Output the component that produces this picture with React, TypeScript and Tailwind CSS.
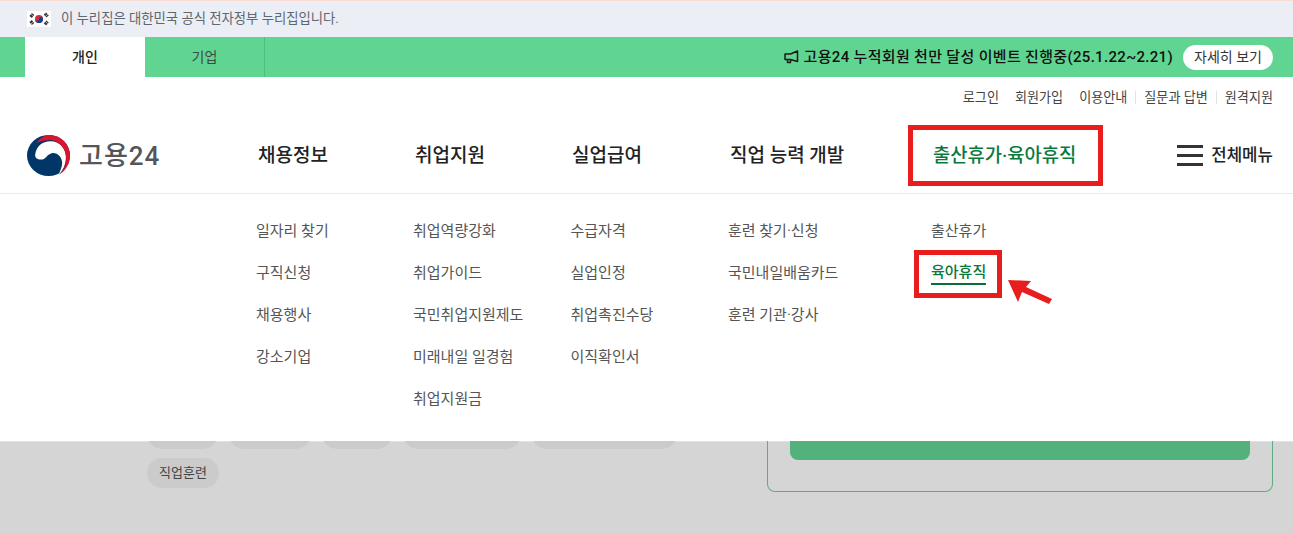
const FONT = "font-['Roboto','Noto_Sans_CJK_KR','Noto_Sans',sans-serif]";

const columns = [
  { width: "w-[157px]", items: ["일자리 찾기", "구직신청", "채용행사", "강소기업"] },
  { width: "w-[157.500px]", items: ["취업역량강화", "취업가이드", "국민취업지원제도", "미래내일 일경험", "취업지원금"] },
  { width: "w-[157.500px]", items: ["수급자격", "실업인정", "취업촉진수당", "이직확인서"] },
  { width: "w-[203px]", items: ["훈련 찾기·신청", "국민내일배움카드", "훈련 기관·강사"] },
];

const navItems = [
  { label: "채용정보", width: "w-[157px]" },
  { label: "취업지원", width: "w-[157px]" },
  { label: "실업급여", width: "w-[158px]" },
  { label: "직업 능력 개발", width: "w-[203px]" },
];

function Flag() {
  return (
    <svg width="24" height="16" viewBox="0 0 24 16" className="shrink-0 bg-white">
      <circle cx="12" cy="8" r="4" fill="#cd2e3a" />
      <path d="M8 8a4 4 0 0 0 8 0a2 2 0 0 0-4 0a2 2 0 0 1-4 0z" fill="#0047a0" />
      <g stroke="#333" strokeWidth="1.5" strokeDasharray="2.2 .5">
        <path d="M3 5.500 5.500 2.500M4.200 6.500 6.700 3.500M17.300 3 20 6M18.600 2 21.200 5M3 10.500 5.500 13.500M4.200 9.500 6.700 12.500M17.300 13 20 10M18.600 14 21.200 11" />
      </g>
    </svg>
  );
}

function Logo() {
  return (
    <svg width="43" height="41" viewBox="0 0 42 40" className="shrink-0">
      <ellipse cx="21" cy="20" rx="21" ry="20" fill="#003668" />
      <path d="M8 19C9 11 15 6 23 6C32 6 38 13 38 21C38 29 35 35 31 38.500C33.500 33 35 29 34 25C33 20 28 16.500 23.500 18C19 19.500 18.500 24 13.500 24C10 24 7.500 22 8 19z" fill="#fff" />
      <path d="M9 8C13 2.500 18 0 22 0C33 0 42 9 42 20C42 29 37 35.500 31 39C37 33 39 26 38 20C36.500 10.500 28.500 4.500 21 5C16 5.300 12 6 9 8z" fill="#d8152f" />
    </svg>
  );
}

function Megaphone() {
  return (
    <svg width="15" height="14" viewBox="0 0 15 14" fill="none" stroke="#1a1a1a" strokeWidth="1.500" className="shrink-0">
      <path d="M1 4H6.500L13.500 1V11.500L6.500 9.500H1zM3.500 9.500V12.500H6.500V9.500" strokeLinejoin="round" />
    </svg>
  );
}

function Arrow() {
  return (
    <svg width="46" height="30" viewBox="0 0 46 30" className="absolute left-[1007px] top-[279px] z-20">
      <path d="M1 1 24 2 19 8 45 20 42 25 15 13 11 23z" fill="#e81e1e" />
    </svg>
  );
}

export default function App() {
  return (
    <div className={`relative h-[533px] w-[1293px] overflow-hidden bg-[#d5d5d5] ${FONT}`}>
      <div className="flex h-[37px] items-center gap-[10px] border-t border-[#fbdcd3] bg-[#ebeef4] pl-[27px] text-[13.350px] text-[#5f6670]">
        <Flag />
        <span className="pt-px">이 누리집은 대한민국 공식 전자정부 누리집입니다.</span>
      </div>

      <div className="flex h-10 items-center bg-[#60d592] pl-[25px] pr-5 text-[14px]">
        <div className="flex h-full w-[120px] items-center justify-center bg-white font-medium text-[#222]">개인</div>
        <div className="flex h-full w-[120px] items-center justify-center border-r border-[#52bd80] text-[#3c4a42]">기업</div>
        <div className="ml-auto flex items-center gap-[5px]">
          <Megaphone />
          <span className="text-[15px] font-medium tracking-[0.32px] text-[#111]">고용24 누적회원 천만 달성 이벤트 진행중(25.1.22~2.21)</span>
          <span className="ml-[5px] flex h-[25px] w-[90px] items-center justify-center rounded-full bg-white text-[14px] text-[#333]">자세히 보기</span>
        </div>
      </div>

      <div className="relative z-10 bg-white">
        <div className="flex h-10 items-center justify-end pr-5 text-[13.100px] leading-[13px] text-[#444]">
          <span className="pr-[8px]">로그인</span>
          <span className="px-[8px]">회원가입</span>
          <span className="border-r border-[#e2e2e2] px-[8px]">이용안내</span>
          <span className="border-r border-[#e2e2e2] px-[8px]">질문과 답변</span>
          <span className="pl-[8px]">원격지원</span>
        </div>

        <div className="flex h-[77px] items-center border-b border-[#eaeaea] pl-[27px] pr-5">
          <div className="flex w-[231px] items-center gap-[9px]">
            <Logo />
            <span className="pt-[2px] text-[26px] font-medium tracking-[1px] text-[#54565a]">고용24</span>
          </div>
          {navItems.map((item) => (
            <div key={item.label} className={`${item.width} pt-[3px] text-[19px] font-medium text-[#222]`}>
              {item.label}
            </div>
          ))}
          <div className="pt-[3px] text-[18.750px] font-medium text-[#0a7a3b]">출산휴가·육아휴직</div>
          <div className="ml-auto flex items-center gap-[8px]">
            <div className="flex w-[26px] flex-col gap-[6px]">
              <span className="h-[3px] bg-[#333]" />
              <span className="h-[3px] bg-[#333]" />
              <span className="h-[3px] bg-[#333]" />
            </div>
            <span className="pt-[2px] text-[16.800px] font-medium text-[#222]">전체메뉴</span>
          </div>
        </div>

        <div className="flex h-[247px] pl-[256px] pt-[16px] text-[15px] text-[#555]">
          {columns.map((col) => (
            <ul key={col.items[0]} className={col.width}>
              {col.items.map((item) => (
                <li key={item} className="flex h-[42px] items-center">{item}</li>
              ))}
            </ul>
          ))}
          <ul>
            <li className="flex h-[42px] items-center">출산휴가</li>
            <li className="flex h-[42px] items-center">
              <span className="border-b-2 border-[#0a6e36] font-medium leading-[21px] text-[#0a7a3b]">육아휴직</span>
            </li>
          </ul>
        </div>
      </div>

      <div className="flex h-[92px] border-t border-[#e2e2e2] pl-[147px]">
        <div className="w-[620px] text-[13px] text-[#444]">
          <div className="-mt-[23px] flex gap-[11px]">
            <span className="h-[30px] w-[71px] rounded-full bg-[#cbcbcb]" />
            <span className="h-[30px] w-[82px] rounded-full bg-[#cbcbcb]" />
            <span className="h-[30px] w-[70px] rounded-full bg-[#cbcbcb]" />
            <span className="h-[30px] w-[118px] rounded-full bg-[#cbcbcb]" />
            <span className="h-[30px] w-[145px] rounded-full bg-[#cbcbcb]" />
          </div>
          <div className="mt-[9px] flex h-[30px] w-[72px] items-center justify-center rounded-full bg-[#cbcbcb]">직업훈련</div>
        </div>
        <div className="-mt-px h-[51px] w-[506px] rounded-b-lg border border-t-0 border-[#5cae7f] px-[22px]">
          <div className="h-[19px] rounded-b-lg bg-[#53b27c]" />
        </div>
      </div>

      <div className="absolute left-[908px] top-[125px] z-20 h-[61px] w-[195px] border-[5px] border-[#e81e1e]" />
      <div className="absolute left-[914px] top-[250px] z-20 h-[48px] w-[88px] border-[5px] border-[#e81e1e]" />
      <Arrow />
    </div>
  );
}
